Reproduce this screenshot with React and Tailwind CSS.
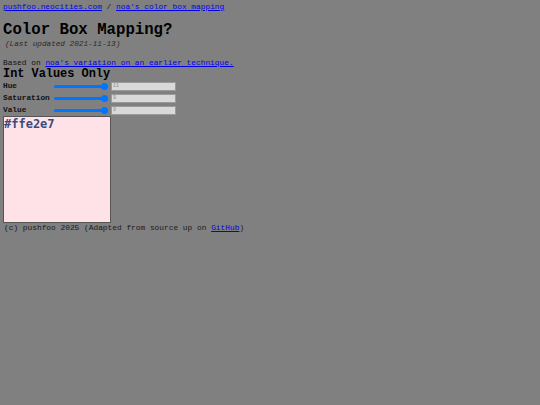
const rows = [
  { label: "Hue", value: "11" },
  { label: "Saturation", value: "9" },
  { label: "Value", value: "9" },
];

const Slider = () => (
  <div className="relative w-[54px] h-[7px] flex items-center">
    <div className="w-full h-[3px] rounded-full bg-[#0075ff]" />
    <div className="absolute right-0 w-[7px] h-[7px] rounded-full bg-[#0075ff]" />
  </div>
);

const App = () => {
  return (
    <div className="min-h-[405px] w-full bg-[#808080] px-[3px] pt-[3px] font-['Liberation_Mono',monospace] text-[#111]">
      <p className="text-[7.85px] leading-[8px]">
        <a href="#" className="text-[#0000ee] underline">
          pushfoo.neocities.com
        </a>{" "}
        /{" "}
        <a href="#" className="text-[#0000ee] underline">
          noa's color box mapping
        </a>
      </p>
      <h1 className="mt-[10px] text-[15.7px] leading-[18px] font-bold text-black">
        Color Box Mapping?
      </h1>
      <p className="mt-[1px] pl-[2px] text-[7.7px] leading-[9px] italic text-[#2a2a2a]">
        (Last updated 2021-11-13)
      </p>
      <p className="mt-[9px] text-[7.85px] leading-[9px]">
        Based on{" "}
        <a href="#" className="text-[#0000ee] underline">
          noa's variation on an earlier technique.
        </a>
      </p>
      <h2 className="mt-[2px] text-[11.9px] leading-[10px] font-bold text-black">
        Int Values Only
      </h2>
      <div className="flex flex-col pt-[1px]">
        {rows.map((row) => (
          <div key={row.label} className="flex items-center h-[12px]">
            <span className="w-[51px] text-[7.8px] leading-[9px] font-bold">
              {row.label}
            </span>
            <Slider />
            <input
              readOnly
              value={row.value}
              className="ml-[3px] w-[65px] h-[9px] bg-[#d9d9d9] border border-[#9a9a9a] px-[1px] text-[5px] leading-[7px] text-[#8a8a8a] outline-none"
            />
          </div>
        ))}
      </div>
      <div className="w-[108px] h-[107px] bg-[#ffe2e7] border border-[#555]">
        <span className="block font-['DejaVu_Sans_Mono',monospace] font-bold text-[12px] leading-[14px] text-[#3b4a7a]">
          #ffe2e7
        </span>
      </div>
      <p className="pl-[1px] text-[7.85px] leading-[9px] text-[#1a1a1a]">
        (c) pushfoo 2025 (Adapted from source up on{" "}
        <a href="#" className="text-[#0000ee] underline">
          GitHub
        </a>
        )
      </p>
    </div>
  );
};

export default App;
